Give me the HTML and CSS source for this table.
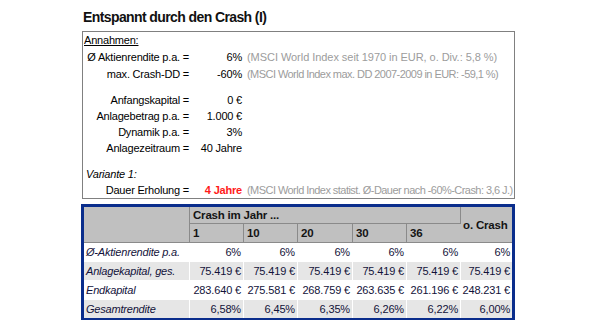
FILE: index.html
```html
<!DOCTYPE html>
<html lang="de">
<head>
<meta charset="utf-8">
<title>Entspannt durch den Crash (I)</title>
<link rel="stylesheet" href="styles.css">
</head>
<body>
<div class="page">
  <h1 class="title">Entspannt durch den Crash (I)</h1>
  <div class="box">
    <div class="full head"><u>Annahmen:</u></div>
    <div class="lbl r17">Ø Aktienrendite p.a. =</div><div class="val r17">6%</div><div class="note r17 wide">(MSCI World Index seit 1970 in EUR, o. Div.: 5,8 %)</div>
    <div class="lbl r17">max. Crash-DD =</div><div class="val r17">-60%</div><div class="note r17 tight">(MSCI World Index max. DD 2007-2009 in EUR: -59,1 %)</div>
    <div class="full sp9"></div>
    <div class="lbl">Anfangskapital =</div><div class="val">0 €</div><div class="note"></div>
    <div class="lbl">Anlagebetrag p.a. =</div><div class="val">1.000 €</div><div class="note"></div>
    <div class="lbl">Dynamik p.a. =</div><div class="val">3%</div><div class="note"></div>
    <div class="lbl">Anlagezeitraum =</div><div class="val">40 Jahre</div><div class="note"></div>
    <div class="full sp10"></div>
    <div class="full variant">Variante 1:</div>
    <div class="lbl">Dauer Erholung =</div><div class="val red">4 Jahre</div><div class="note tight">(MSCI World Index statist. Ø-Dauer nach -60%-Crash: 3,6 J.)</div>
  </div>
  <div class="tablewrap">
    <table class="grid">
      <colgroup>
        <col class="c-label"><col class="c-a"><col class="c-a"><col class="c-b"><col class="c-a"><col class="c-a"><col class="c-last">
      </colgroup>
      <thead>
        <tr class="h1">
          <th rowspan="2" class="blank"></th>
          <th colspan="5" class="left">Crash im Jahr ...</th>
          <th rowspan="2" class="left ocrash">o. Crash</th>
        </tr>
        <tr class="h2">
          <th class="left">1</th><th class="left">10</th><th class="left">20</th><th class="left">30</th><th class="left">36</th>
        </tr>
      </thead>
      <tbody>
        <tr class="w"><td class="rl">Ø-Aktienrendite p.a.</td><td>6%</td><td>6%</td><td>6%</td><td>6%</td><td>6%</td><td>6%</td></tr>
        <tr class="g"><td class="rl">Anlagekapital, ges.</td><td>75.419 €</td><td>75.419 €</td><td>75.419 €</td><td>75.419 €</td><td>75.419 €</td><td>75.419 €</td></tr>
        <tr class="w"><td class="rl">Endkapital</td><td>283.640 €</td><td>275.581 €</td><td>268.759 €</td><td>263.635 €</td><td>261.196 €</td><td>248.231 €</td></tr>
        <tr class="g last"><td class="rl">Gesamtrendite</td><td>6,58%</td><td>6,45%</td><td>6,35%</td><td>6,26%</td><td>6,22%</td><td>6,00%</td></tr>
      </tbody>
    </table>
  </div>
</div>
</body>
</html>
```
FILE: styles.css
```css
* { box-sizing: border-box; }
html, body { margin: 0; padding: 0; background: #ffffff; }
body {
  font-family: "Liberation Sans", Arial, sans-serif;
  font-size: 11px;
  color: #000000;
  overflow: hidden;
}
.page {
  width: 595px;
  height: 320px;
  padding-left: 81px;
}
.title {
  margin: 0;
  padding: 8px 0 0 2px;
  height: 31px;
  font-size: 14px;
  line-height: 18px;
  font-weight: bold;
  letter-spacing: -0.6px;
  color: #111111;
}
.box {
  margin-left: 1px;
  width: 433px;
  height: 168px;
  border: 1px solid #808080;
  display: grid;
  grid-template-columns: 106px 53px 1fr;
  grid-template-rows: 17px 17px 17px 9px 16px 16px 16px 16px 10px 16px 16px;
  align-items: center;
  letter-spacing: -0.2px;
  white-space: nowrap;
  overflow: hidden;
}
.box > div { line-height: 16px; }
.full { grid-column: 1 / 4; }
.head { padding-left: 1px; height: 17px; line-height: 17px; }
.r17 { height: 17px; }
.box .lbl { text-align: right; }
.box .val { text-align: right; }
.box .note {
  padding-left: 5px;
  color: #9c9c9c;
  letter-spacing: 0;
  min-width: 0;
}
.box .note.wide { letter-spacing: -0.05px; }
.box .note.tight { letter-spacing: -0.55px; }
.sp9 { height: 9px; }
.sp10 { height: 10px; }
.variant { font-style: italic; padding-left: 3px; }
.red { color: #ff1a1a; font-weight: bold; }

.tablewrap {
  margin-top: 5px;
  width: 434px;
  border: 3px solid #0a2d8c;
}
.grid {
  width: 428px;
  border-collapse: separate;
  border-spacing: 0;
  table-layout: fixed;
  letter-spacing: -0.15px;
  color: #12123a;
}
.c-label { width: 106px; }
.c-a { width: 54px; }
.c-b { width: 55px; }
.c-last { width: 51px; }
.grid th {
  background: #c0c0c0;
  font-weight: bold;
  font-size: 11.5px;
  color: #141414;
  border-right: 1px solid #8a8a8a;
  border-bottom: 1px solid #8a8a8a;
  padding: 0 2px 0 3px;
  white-space: nowrap;
  letter-spacing: -0.2px;
}
.grid th:last-child { border-right: none; }
.grid .h1 th { height: 17px; }
.grid .h2 th { height: 19px; }
.grid th.left { text-align: left; }
.grid th.ocrash { padding-left: 2px; vertical-align: middle; }
.grid td {
  height: 19px;
  padding: 0 2px 0 0;
  text-align: right;
  white-space: nowrap;
  border-right: 1px solid #ffffff;
  border-bottom: 1px solid #ffffff;
}
.grid td:last-child { border-right: none; }
.grid td.rl {
  text-align: left;
  font-style: italic;
  padding-left: 2px;
  letter-spacing: -0.2px;
}
.grid tr.g td { background: #e6e6e6; }
.grid tr.w td { background: #ffffff; }
.grid tr.last td { height: 18px; border-bottom: none; }
```
